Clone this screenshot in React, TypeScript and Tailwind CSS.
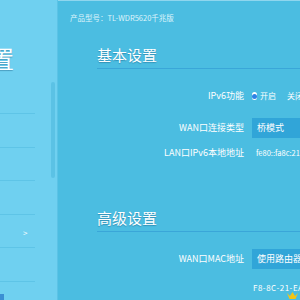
import React from 'react';

const font = "font-['Noto_Sans_CJK_SC','Noto_Sans',sans-serif]";

const Row = ({ label, children, className = '' }: { label: string; children?: React.ReactNode; className?: string }) => (
  <div className={`flex items-center h-[20px] ${className}`}>
    <div className="w-[147px] shrink-0 text-right text-[9px] text-white whitespace-nowrap">{label}</div>
    <div className="ml-[8px] flex items-center h-full flex-1 min-w-0 whitespace-nowrap">{children}</div>
  </div>
);

const Title = ({ text, className = '' }: { text: string; className?: string }) => (
  <div className={`h-[35px] flex items-end pb-[3px] border-b border-[#3aa6d8] ${className}`}>
    <span className="text-[15px] leading-[20px] text-white [text-shadow:0_1px_1px_rgba(0,60,100,0.35)]">{text}</span>
  </div>
);

const Sidebar = () => (
  <div className="relative w-[58px] shrink-0 h-full bg-[#6fd0f0] border-r border-[#5cc3e6] overflow-hidden">
    <div className="h-[45px]" />
    <div className="-ml-[34px] text-[24px] leading-[26px] text-white whitespace-nowrap [text-shadow:0_1px_1px_rgba(0,60,100,0.35)]">设置</div>
    <div className="mt-[42px] flex flex-col">
      {[0, 1, 2, 3, 4, 5].map((i) => (
        <div key={i} className={`relative w-[35px] border-b border-[#5ec4e7] ${i === 0 ? 'h-[1px]' : 'h-[33.6px]'}`}>
          {i === 4 && <span className="absolute left-[23px] top-[14px] text-[8px] leading-[8px] text-white">&gt;</span>}
        </div>
      ))}
    </div>
    <div className="absolute left-[51px] top-[82px] w-[4px] h-[96px] rounded-full bg-[#5bc2e5]" />
    <div className="absolute left-0 bottom-0 w-[4px] h-[6px] bg-[#3b8fd3]" />
  </div>
);

const App = () => {
  return (
    <div className={`relative w-[300px] h-[300px] flex overflow-hidden bg-[#4bbde1] ${font}`}>
      <Sidebar />
      <div className="flex-1 min-w-0 h-full flex flex-col border-t border-[#8fd6ee]">
        <div className="h-[33px] flex items-center pl-[12px] text-[7.5px] text-[#dff4fb] whitespace-nowrap">
          产品型号：TL-WDR5620千兆版
        </div>
        <div className="pl-[39px] flex flex-col">
          <Title text="基本设置" />
          <Row label="IPv6功能" className="mt-[17px]">
            <span className="w-[8px] h-[8px] rounded-full bg-white flex items-center justify-center">
              <span className="w-[5px] h-[5px] rounded-full bg-[#2e82e6]" />
            </span>
            <span className="ml-[3px] text-[8px] text-white">开启</span>
            <span className="ml-[8px] w-[8px] h-[8px] rounded-full bg-white" />
            <span className="ml-[3px] text-[8px] text-white">关闭</span>
          </Row>
          <Row label="WAN口连接类型" className="mt-[12px]">
            <div className="h-full w-[80px] bg-[#31a5d8] flex items-center pl-[5px] text-[9px] text-white">桥模式</div>
          </Row>
          <Row label="LAN口IPv6本地地址" className="mt-[5px]">
            <span className="ml-[4px] text-[7.5px] text-white">fe80::fa8c:21ff:feea:1</span>
          </Row>
          <Title text="高级设置" className="mt-[34px]" />
          <Row label="WAN口MAC地址" className="mt-[17px]">
            <div className="h-full w-[80px] bg-[#31a5d8] flex items-center pl-[5px] text-[9px] text-white">使用路由器的MAC地址</div>
          </Row>
          <Row label="" className="mt-[9px]">
            <span className="ml-[1px] text-[8px] tracking-[0.5px] text-white">F8-8C-21-EA-01-02</span>
          </Row>
        </div>
      </div>
      <svg className="absolute left-[287px] top-[292px]" width="11" height="8" viewBox="0 0 11 8">
        <path d="M0 1 L2.5 7 H8.5 L11 1 L8 4 L5.5 0 L3 4 Z" fill="#f4c515" />
      </svg>
    </div>
  );
};

export default App;
